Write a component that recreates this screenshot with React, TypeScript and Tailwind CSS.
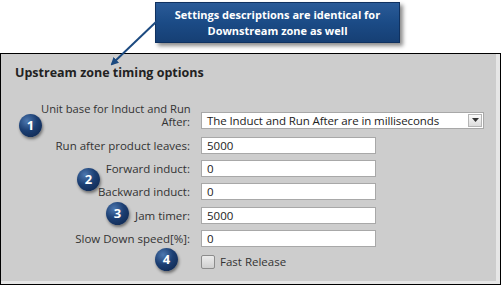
import React from "react";

const font = { fontFamily: '"Open Sans", "Noto Sans", sans-serif' };

const Badge: React.FC<{ n: number; className: string }> = ({ n, className }) => (
  <div
    className={`absolute w-[23px] h-[23px] rounded-full flex items-center justify-center text-white font-bold text-[13px] shadow-[1px_2px_3px_rgba(0,0,0,0.45)] bg-[radial-gradient(circle_at_35%_30%,#4d78b0_0%,#1c3f73_45%,#0c2146_100%)] ${className}`}
  >
    {n}
  </div>
);

const Field: React.FC<{ label: string; value: string }> = ({ label, value }) => (
  <div className="flex items-center h-[17px]">
    <div className="w-[150px] text-right pr-[1px] text-[11.5px] text-[#333]">{label}</div>
    <div className="ml-[10px] w-[175px] h-[17px] bg-white border border-[#a8a8a8] text-[11.5px] leading-[15px] pl-[5px] text-[#222]">
      {value}
    </div>
  </div>
);

const App: React.FC = () => {
  return (
    <div className="relative w-[503px] h-[285px] bg-white overflow-hidden" style={font}>
      {/* Callout */}
      <div className="h-[53px] pt-[2px] pl-[155px]">
        <div className="w-[245px] h-[41px] bg-[linear-gradient(180deg,#2a5b98_0%,#1b4b86_50%,#163f74_100%)] border border-[#0f3160] shadow-[3px_3px_4px_rgba(0,0,0,0.45)] flex flex-col items-center justify-center text-white font-bold text-[11px] leading-[16px]">
          <span>Settings descriptions are identical for</span>
          <span>Downstream zone as well</span>
        </div>
      </div>

      {/* Panel */}
      <div className="w-[501px] h-[232px] border border-black bg-[#e6e6e6] pr-[4px] pb-[3px]">
        <div className="w-full h-full bg-[#cdcdcd] pl-[14px] pt-[10px]">
          <div className="text-[12.5px] font-bold text-[#222]">Upstream zone timing options</div>

          <div className="mt-[19px] pl-[26px] flex flex-col">
            <div className="flex items-end">
              <div className="w-[150px] text-right pr-[1px] text-[11.2px] leading-[13.5px] text-[#333] whitespace-nowrap">
                Unit base for Induct and Run
                <br />
                After:
              </div>
              <div className="ml-[10px] w-[283px] h-[17px] bg-white border border-[#a8a8a8] flex items-center">
                <span className="flex-1 pl-[5px] text-[11.5px] text-[#222] leading-[15px] tracking-[-0.1px]">
                  The Induct and Run After are in milliseconds
                </span>
                <div className="w-[14px] h-[13px] mr-[1px] bg-[linear-gradient(180deg,#fafafa,#dcdcdc)] border border-[#b5b5b5] flex items-center justify-center">
                  <svg width="7" height="4" viewBox="0 0 7 4">
                    <path d="M0 0 L7 0 L3.5 4 Z" fill="#333" />
                  </svg>
                </div>
              </div>
            </div>

            <div className="mt-[8px] flex flex-col gap-[6.3px]">
              <Field label="Run after product leaves:" value="5000" />
              <Field label="Forward induct:" value="0" />
              <Field label="Backward induct:" value="0" />
              <Field label="Jam timer:" value="5000" />
              <Field label="Slow Down speed[%]:" value="0" />
            </div>

            <div className="mt-[8px] ml-[160px] flex items-center h-[14px]">
              <div className="w-[14px] h-[14px] rounded-[2px] border border-[#8c8c8c] bg-[linear-gradient(180deg,#ececec,#cfcfcf)]" />
              <span className="ml-[5px] text-[11.5px] text-[#333]">Fast Release</span>
            </div>
          </div>
        </div>
      </div>

      {/* Arrow */}
      <svg className="absolute left-0 top-0" width="503" height="285">
        <defs>
          <marker id="ah" markerWidth="8" markerHeight="8" refX="6" refY="4" orient="auto" markerUnits="userSpaceOnUse">
            <path d="M0 0 L8 4 L0 8 Z" fill="#1c4a80" />
          </marker>
        </defs>
        <line x1="157" y1="21" x2="112" y2="64" stroke="#1c4a80" strokeWidth="2" markerEnd="url(#ah)" />
      </svg>

      <Badge n={1} className="left-[19px] top-[114px]" />
      <Badge n={2} className="left-[77px] top-[168px]" />
      <Badge n={3} className="left-[106px] top-[202px]" />
      <Badge n={4} className="left-[155px] top-[248px]" />
    </div>
  );
};

export default App;
